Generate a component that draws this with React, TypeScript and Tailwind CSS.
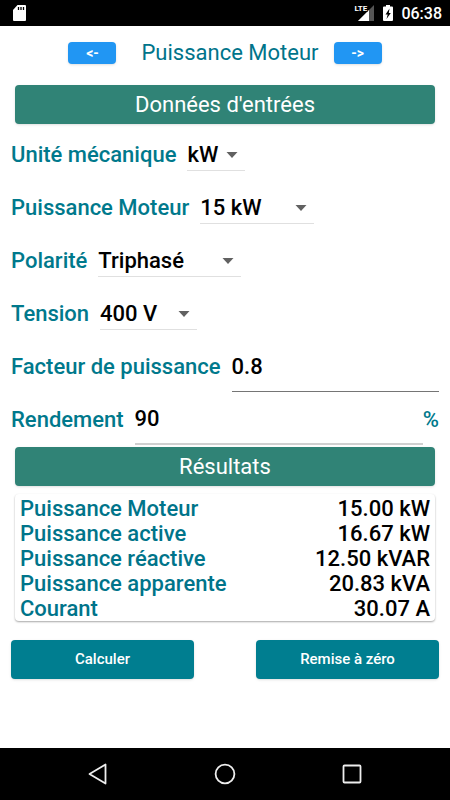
import React from 'react';

const SectionTitle = ({ children }: { children: React.ReactNode }) => (
  <h2 className="mx-1 h-[39px] rounded bg-[#308376] text-center text-[22px] leading-[39px] font-normal text-white shadow-sm">
    {children}
  </h2>
);

type SelectRowProps = {
  id: string;
  label: string;
  options: string[];
  value: string;
  width: string;
};

const SelectRow = ({ id, label, options, value, width }: SelectRowProps) => (
  <div className="flex h-[53px] items-center gap-[11px]">
    <label htmlFor={id} className="font-medium text-[#00798c]">{label}</label>
    <div className={`relative h-[32px] ${width}`}>
      <select
        id={id}
        defaultValue={value}
        className="h-full w-full appearance-none border-b border-[#e0e0e0] bg-transparent font-medium text-black outline-none"
      >
        {options.map((option) => (
          <option key={option}>{option}</option>
        ))}
      </select>
      <svg
        className="pointer-events-none absolute top-[13px] right-[7px] h-[6px] w-[12px]"
        viewBox="0 0 12 6"
        fill="#616161"
      >
        <path d="M0.5 0h11L6 6z" />
      </svg>
    </div>
  </div>
);

const results = [
  { name: 'Puissance Moteur', value: '15.00 kW' },
  { name: 'Puissance active', value: '16.67 kW' },
  { name: 'Puissance réactive', value: '12.50 kVAR' },
  { name: 'Puissance apparente', value: '20.83 kVA' },
  { name: 'Courant', value: '30.07 A' },
];

const StatusBar = () => (
  <header className="flex h-[26px] items-center bg-black pr-2 pl-[13px] text-white">
    <svg className="h-[16px] w-[13px]" viewBox="0 0 13 16" fill="none">
      <path d="M4.5 0H12a1 1 0 0 1 1 1v14a1 1 0 0 1-1 1H1a1 1 0 0 1-1-1V5z" fill="#fff" />
      <path d="M5.5 2v3M8 2v3M10.500 2v3" stroke="#000" strokeWidth="1.3" />
    </svg>
    <div className="ml-auto flex items-center">
      <div className="relative h-[16px] w-[20px]">
        <svg className="h-full w-full" viewBox="0 0 20 16">
          <path d="M20 0v16H4z" fill="#555" />
          <path d="M15 5v11H4z" fill="#fff" />
          <path d="M0 0h13.500v7H0z" fill="#000" />
        </svg>
        <span className="absolute top-0 left-0 text-[8px] leading-[8px] font-bold">LTE</span>
      </div>
      <svg className="ml-[9px] h-[16px] w-[10px]" viewBox="0 0 10 16">
        <path d="M3 0h4v1.500h2a1 1 0 0 1 1 1V15a1 1 0 0 1-1 1H1a1 1 0 0 1-1-1V2.500a1 1 0 0 1 1-1h2z" fill="#fff" />
        <path d="M6.500 3.500L2.500 9.500h2.200L3.500 14L7.800 8H5.800z" fill="#000" />
      </svg>
      <span className="ml-2 text-[16px] font-medium">06:38</span>
    </div>
  </header>
);

const NavBar = () => (
  <nav className="flex h-[52px] items-center justify-center gap-[99px] bg-black">
    <button type="button" aria-label="Retour">
      <svg className="h-[28px] w-[28px]" viewBox="0 0 28 28" fill="none" stroke="#eee" strokeWidth="1.8">
        <path d="M21.500 4.500v19L5.500 14z" strokeLinejoin="round" />
      </svg>
    </button>
    <button type="button" aria-label="Accueil">
      <svg className="h-[28px] w-[28px]" viewBox="0 0 28 28" fill="none" stroke="#eee" strokeWidth="1.8">
        <circle cx="14" cy="14" r="9.400" />
      </svg>
    </button>
    <button type="button" aria-label="Applications">
      <svg className="h-[28px] w-[28px]" viewBox="0 0 28 28" fill="none" stroke="#eee" strokeWidth="1.8">
        <rect x="5.500" y="5.500" width="17" height="17" rx="1" />
      </svg>
    </button>
  </nav>
);

export default function App() {
  return (
    <div className="flex min-h-screen flex-col bg-white font-['Roboto',sans-serif] text-[22px] leading-[25px]">
      <StatusBar />

      <main className="flex flex-1 flex-col px-[11px]">
        <div className="flex h-[59px] items-center justify-center pb-[6px]">
          <button type="button" className="h-[22px] w-[48px] rounded-[4px] bg-[#2196f3] text-[14px] leading-[22px] font-bold text-white shadow">
            &lt;-
          </button>
          <h1 className="pr-[15px] pl-[25px] text-[22px] font-normal text-[#00748a]">Puissance Moteur</h1>
          <button type="button" className="h-[22px] w-[48px] rounded-[4px] bg-[#2196f3] text-[14px] leading-[22px] font-bold text-white shadow">
            -&gt;
          </button>
        </div>

        <SectionTitle>Données d'entrées</SectionTitle>

        <form className="pt-1 pb-px">
          <SelectRow id="unite" label="Unité mécanique" options={['kW', 'ch', 'HP']} value="kW" width="w-[58px]" />
          <SelectRow id="puissance" label="Puissance Moteur" options={['11 kW', '15 kW', '18.5 kW']} value="15 kW" width="w-[114px]" />
          <SelectRow id="polarite" label="Polarité" options={['Monophasé', 'Triphasé']} value="Triphasé" width="w-[143px]" />
          <SelectRow id="tension" label="Tension" options={['230 V', '400 V', '690 V']} value="400 V" width="w-[97px]" />
          <div className="flex h-[53px] items-center gap-[11px]">
            <label htmlFor="facteur" className="font-medium text-[#00798c]">Facteur de puissance</label>
            <input
              id="facteur"
              defaultValue="0.8"
              className="h-[51px] min-w-0 flex-1 border-b border-[#757575] font-medium text-black outline-none"
            />
          </div>
          <div className="flex h-[53px] items-center">
            <label htmlFor="rendement" className="mr-[11px] font-medium text-[#00798c]">Rendement</label>
            <input
              id="rendement"
              defaultValue="90"
              className="h-[51px] min-w-0 flex-1 border-b-2 border-[#d0d0d0] font-medium text-black outline-none"
            />
            <span className="font-medium text-[#00798c]">%</span>
          </div>
        </form>

        <SectionTitle>Résultats</SectionTitle>

        <dl className="mx-1 mt-[8px] rounded px-[5px] pt-[2px] shadow-[0_1px_2px_rgba(0,0,0,0.35)]">
          {results.map((result) => (
            <div key={result.name} className="flex justify-between">
              <dt className="font-medium text-[#00748a]">{result.name}</dt>
              <dd className="font-medium text-black">{result.value}</dd>
            </div>
          ))}
        </dl>

        <div className="mt-[19px] flex justify-between gap-[62px] text-[15px] font-medium text-white">
          <button type="button" className="h-[39px] flex-1 rounded bg-[#007e90] shadow">Calculer</button>
          <button type="button" className="h-[39px] flex-1 rounded bg-[#007e90] shadow">Remise à zéro</button>
        </div>
      </main>

      <NavBar />
    </div>
  );
}
